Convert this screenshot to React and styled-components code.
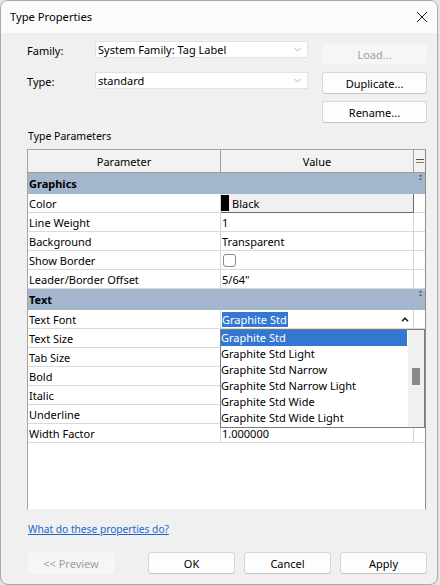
import React from "react";
import styled, { createGlobalStyle } from "styled-components";

const Global = createGlobalStyle`
  html, body { margin: 0; padding: 0; background: #e4e4e4; }
  body { font-family: "Noto Sans", "Open Sans", sans-serif; font-size: 11px; color: #000; }
  * { box-sizing: border-box; }
`;

const Window = styled.div`
  position: relative;
  width: 438px;
  height: 585px;
  border: 1px solid #a9a9a9;
  border-radius: 8px;
  background: #f0f0f0;
  display: flex;
  flex-direction: column;
  overflow: hidden;
`;

const TitleBar = styled.div`
  height: 32px;
  flex: none;
  display: flex;
  align-items: center;
  justify-content: space-between;
  padding: 0 8px 1px 9px;
  background: #fbfbfb;
  font-size: 11.2px;
`;

const CloseBtn = styled.div`
  width: 14px;
  height: 14px;
  display: flex;
  align-items: center;
  justify-content: center;
`;

const Body = styled.div`
  flex: 1;
  display: flex;
  flex-direction: column;
  padding: 0 10px 10px 26px;
`;

const TopSection = styled.div`
  margin-top: 8px;
  display: flex;
  justify-content: space-between;
  align-items: flex-start;
`;

const Fields = styled.div`
  display: grid;
  grid-template-columns: 68px 213px;
  grid-auto-rows: 17px;
  row-gap: 14px;
  align-items: center;
`;

const Label = styled.div`
  font-size: 11px;
  line-height: 17px;
  padding-top: 2px;
`;

const Select = styled.div`
  height: 17px;
  background: #fff;
  border: 1px solid #e2e2e2;
  display: flex;
  align-items: center;
  justify-content: space-between;
  padding: 0 6px 0 2px;
  font-size: 11px;
  line-height: 15px;
`;

const SideButtons = styled.div`
  display: flex;
  flex-direction: column;
  gap: 7px;
  padding-top: 2px;
  width: 105px;
`;

const Button = styled.div`
  height: ${(p) => p.$h || 22}px;
  width: ${(p) => (p.$w ? p.$w + "px" : "auto")};
  display: flex;
  align-items: center;
  justify-content: center;
  border-radius: 3px;
  font-size: 11px;
  background: ${(p) => (p.$disabled ? "#f6f6f6" : "#fdfdfd")};
  border: 1px solid ${(p) => (p.$disabled ? "#f4f4f4" : "#d6d6d6")};
  border-bottom-color: ${(p) => (p.$disabled ? "#f4f4f4" : "#c4c4c4")};
  color: ${(p) => (p.$disabled ? "#a0a0a0" : "#000")};
`;

const SectionLabel = styled.div`
  margin-top: 6px;
  line-height: 15px;
  font-size: 10.5px;
  padding-left: 1px;
`;

const Table = styled.div`
  margin-top: 5px;
  width: 399px;
  height: 361px;
  background: #fff;
  border: 1px solid #a6a6a6;
  border-right-color: #8c8c8c;
  border-bottom: 1px solid #f4f4f4;
  display: flex;
  flex-direction: column;
`;

const HeaderRow = styled.div`
  display: grid;
  grid-template-columns: 193px 193px 11px;
  height: 23px;
  background: #f2f2f2;
  border-bottom: 1px solid #9a9a9a;
`;

const HeaderCell = styled.div`
  display: flex;
  align-items: center;
  justify-content: center;
  border-right: ${(p) => (p.$last ? "none" : "1px solid #a0a0a0")};
  font-size: 11px;
`;

const GroupRow = styled.div`
  position: relative;
  height: 21px;
  background: #a3b6cd;
  display: flex;
  align-items: center;
  padding-left: 1px;
  font-weight: 700;
  font-size: 11px;
`;

const GroupGlyph = styled.div`
  position: absolute;
  right: 3px;
  top: 2px;
  width: 3px;
  height: 5px;
  display: flex;
`;

const DataRow = styled.div`
  position: relative;
  display: grid;
  grid-template-columns: 193px 193px 11px;
  height: 19px;
  border-bottom: 1px solid #dadada;
`;

const Cell = styled.div`
  display: flex;
  align-items: center;
  padding-left: ${(p) => (p.$pad ?? 1)}px;
  border-right: ${(p) => (p.$last ? "none" : "1px solid #d4d4d4")};
  font-size: 11px;
  white-space: nowrap;
  overflow: hidden;
`;

const ColorBox = styled.div`
  display: flex;
  align-items: center;
  height: 19px;
  margin-bottom: -1px;
  background: #f0f0f0;
  border-right: 1px solid #6a6a6a;
  border-bottom: 1px solid #6a6a6a;
  font-size: 11px;
`;

const Swatch = styled.div`
  width: 8px;
  height: 16px;
  background: #000;
  margin: 0 3px 0 0;
`;

const Checkbox = styled.div`
  width: 13px;
  height: 13px;
  border: 1px solid #8a8a8a;
  border-radius: 3px;
  background: #fff;
  margin-left: 1px;
`;

const FontValue = styled.div`
  flex: 1;
  display: flex;
  align-items: center;
  justify-content: space-between;
  padding-right: 4px;
`;

const Highlight = styled.span`
  background: #3378d2;
  color: #fff;
  padding: 0 1px 0 0;
  line-height: 15px;
`;

const DropList = styled.div`
  position: absolute;
  z-index: 5;
  top: 19px;
  left: 192px;
  width: 205px;
  height: 99px;
  background: #fff;
  border: 1px solid #7c7c7c;
  display: flex;
`;

const ListItems = styled.div`
  flex: 1;
`;

const ListItem = styled.div`
  height: 16px;
  line-height: 16px;
  margin-right: 1px;
  font-size: 11px;
  background: ${(p) => (p.$sel ? "#3477d1" : "transparent")};
  color: ${(p) => (p.$sel ? "#fff" : "#000")};
  white-space: nowrap;
`;

const ScrollBar = styled.div`
  width: 16px;
  background: #f0f0f0;
  display: flex;
  justify-content: center;
  padding-top: 38px;
`;

const Thumb = styled.div`
  width: 8px;
  height: 17px;
  background: #8a8a8a;
`;

const Filler = styled.div`
  flex: 1;
  background: #fff;
`;

const Link = styled.a`
  margin-top: 12px;
  color: #1b66cf;
  text-decoration: underline;
  font-size: 10.2px;
  line-height: 14px;
  align-self: flex-start;
  padding-left: 1px;
`;

const Footer = styled.div`
  margin-top: auto;
  display: flex;
  gap: 9px;
`;

const Spacer = styled.div`
  width: 15px;
`;

const Grip = styled.div`
  position: absolute;
  right: 1px;
  bottom: 1px;
  width: 7px;
  height: 7px;
`;

const Chevron = ({ up, color = "#a0a0a0", w = 7 }) => (
  <svg width={w} height="5" viewBox="0 0 7 5">
    <path
      d={up ? "M0.5 4.2 L3.5 1.2 L6.5 4.2" : "M0.5 1 L3.5 4 L6.5 1"}
      fill="none"
      stroke={color}
      strokeWidth={up ? 1.6 : 0.8}
    />
  </svg>
);

const graphics = [
  ["Color", "color"],
  ["Line Weight", "1"],
  ["Background", "Transparent"],
  ["Show Border", "check"],
  ["Leader/Border Offset", '5/64"'],
];

const textRows = [
  ["Text Size", ""],
  ["Tab Size", ""],
  ["Bold", ""],
  ["Italic", ""],
  ["Underline", ""],
  ["Width Factor", "1.000000"],
];

const fonts = [
  "Graphite Std",
  "Graphite Std Light",
  "Graphite Std Narrow",
  "Graphite Std Narrow Light",
  "Graphite Std Wide",
  "Graphite Std Wide Light",
];

const Glyph = () => (
  <GroupGlyph>
    <svg width="3" height="5" viewBox="0 0 3 5">
      <rect x="0.5" y="0" width="2" height="1.5" fill="#505050" />
      <rect x="0.5" y="3.5" width="2" height="1.5" fill="#505050" />
    </svg>
  </GroupGlyph>
);

export default function App() {
  return (
    <>
      <Global />
      <Window>
        <TitleBar>
          <span>Type Properties</span>
          <CloseBtn>
            <svg width="12" height="12" viewBox="0 0 12 12">
              <path d="M1 1 L11 11 M11 1 L1 11" stroke="#1a1a1a" strokeWidth="1" />
            </svg>
          </CloseBtn>
        </TitleBar>
        <Body>
          <TopSection>
            <Fields>
              <Label>Family:</Label>
              <Select>
                <span>System Family: Tag Label</span>
                <Chevron />
              </Select>
              <Label>Type:</Label>
              <Select>
                <span>standard</span>
                <Chevron />
              </Select>
            </Fields>
            <SideButtons>
              <Button $disabled>Load...</Button>
              <Button>Duplicate...</Button>
              <Button>Rename...</Button>
            </SideButtons>
          </TopSection>
          <SectionLabel>Type Parameters</SectionLabel>
          <Table>
            <HeaderRow>
              <HeaderCell>Parameter</HeaderCell>
              <HeaderCell>Value</HeaderCell>
              <HeaderCell $last>
                <svg width="8" height="6" viewBox="0 0 8 6">
                  <rect x="0" y="1" width="8" height="1" fill="#505050" />
                  <rect x="0" y="4" width="8" height="1" fill="#8a8070" />
                </svg>
              </HeaderCell>
            </HeaderRow>
            <GroupRow>
              Graphics
              <Glyph />
            </GroupRow>
            {graphics.map(([name, val]) => (
              <DataRow key={name}>
                <Cell>{name}</Cell>
                {val === "color" ? (
                  <ColorBox>
                    <Swatch />
                    Black
                  </ColorBox>
                ) : val === "check" ? (
                  <Cell>
                    <Checkbox />
                  </Cell>
                ) : (
                  <Cell>{val}</Cell>
                )}
                <Cell $last />
              </DataRow>
            ))}
            <GroupRow>
              Text
              <Glyph />
            </GroupRow>
            <DataRow>
              <Cell>Text Font</Cell>
              <Cell>
                <FontValue>
                  <Highlight>Graphite Std</Highlight>
                  <Chevron up color="#222" w={8} />
                </FontValue>
              </Cell>
              <Cell $last />
              <DropList>
                <ListItems>
                  {fonts.map((f, i) => (
                    <ListItem key={f} $sel={i === 0}>
                      {f}
                    </ListItem>
                  ))}
                </ListItems>
                <ScrollBar>
                  <Thumb />
                </ScrollBar>
              </DropList>
            </DataRow>
            {textRows.map(([name, val]) => (
              <DataRow key={name}>
                <Cell>{name}</Cell>
                <Cell>{val}</Cell>
                <Cell $last />
              </DataRow>
            ))}
            <Filler />
          </Table>
          <Link>What do these properties do?</Link>
          <Footer>
            <Button $disabled $w={88}>
              &lt;&lt; Preview
            </Button>
            <Spacer />
            <Button $w={87}>OK</Button>
            <Button $w={87}>Cancel</Button>
            <Button $w={87}>Apply</Button>
          </Footer>
        </Body>
        <Grip>
          <svg width="7" height="7" viewBox="0 0 7 7">
            <rect x="5" y="1" width="1" height="1" fill="#999" />
            <rect x="3" y="3" width="1" height="1" fill="#999" />
            <rect x="5" y="3" width="1" height="1" fill="#999" />
            <rect x="1" y="5" width="1" height="1" fill="#999" />
            <rect x="3" y="5" width="1" height="1" fill="#999" />
            <rect x="5" y="5" width="1" height="1" fill="#999" />
          </svg>
        </Grip>
      </Window>
    </>
  );
}
